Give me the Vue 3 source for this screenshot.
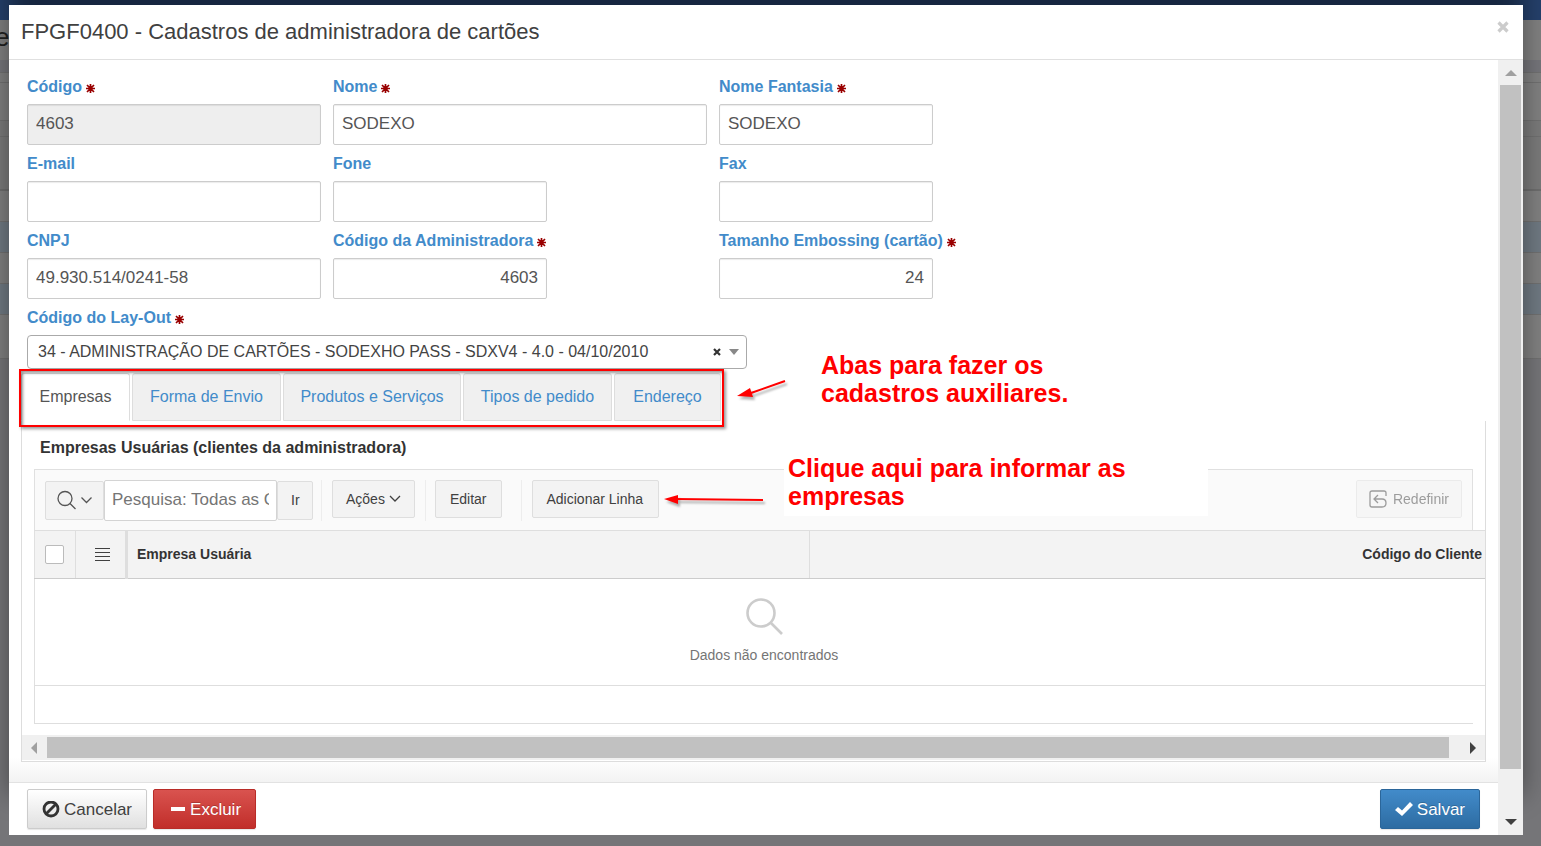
<script setup>
import { ref } from 'vue'

const fields = [
  { id: 'codigo', label: 'Código', value: '4603', required: true, readonly: true },
  { id: 'nome', label: 'Nome', value: 'SODEXO', required: true, wide: true },
  { id: 'fantasia', label: 'Nome Fantasia', value: 'SODEXO', required: true },
  { id: 'email', label: 'E-mail', value: '' },
  { id: 'fone', label: 'Fone', value: '' },
  { id: 'fax', label: 'Fax', value: '' },
  { id: 'cnpj', label: 'CNPJ', value: '49.930.514/0241-58' },
  { id: 'adm', label: 'Código da Administradora', value: '4603', required: true, right: true },
  { id: 'embossing', label: 'Tamanho Embossing (cartão)', value: '24', required: true, right: true },
]
const tabs = ['Empresas', 'Forma de Envio', 'Produtos e Serviços', 'Tipos de pedido', 'Endereço']
const activeTab = ref(0)
const search = ref('')
</script>

<template>
  <div class="page">
    <div class="backdrop" aria-hidden="true">
      <div class="strip navy"></div>
      <div class="strip crumb">e</div>
      <div class="strip bar"></div>
      <div class="strip line"></div>
      <div class="strip tall"></div>
      <div class="strip thin"></div>
      <div class="strip head"></div>
      <div class="strip row"></div>
      <div class="strip row blue"></div>
      <div class="strip row"></div>
      <div class="strip row blue"></div>
      <div class="strip last"></div>
    </div>

    <section class="dialog" role="dialog" aria-labelledby="dialog-title">
      <header class="dialog-head">
        <h1 id="dialog-title">FPGF0400 - Cadastros de administradora de cartões</h1>
        <button class="close" type="button" aria-label="Fechar">
          <svg viewBox="0 0 12 12" width="12" height="12"><path d="M1.500 1.500l9 9M10.500 1.500l-9 9" stroke="#ccc" stroke-width="3.200" /></svg>
        </button>
      </header>

      <div class="dialog-main">
        <div class="column">
          <div class="body">
            <form class="form" @submit.prevent>
              <div v-for="f in fields" :key="f.id" class="field">
                <label :for="f.id">{{ f.label }}
                  <svg v-if="f.required" class="star" viewBox="0 0 9 9"><path d="M4.500 0v9M0 4.500h9M1 1l7 7M8 1l-7 7" /></svg>
                </label>
                <input :id="f.id" type="text" :value="f.value" :readonly="f.readonly"
                  :class="{ full: f.readonly || f.wide || f.id === 'email' || f.id === 'cnpj', readonly: f.readonly, right: f.right }" />
              </div>
              <div class="field layout-field">
                <label for="layout">Código do Lay-Out
                  <svg class="star" viewBox="0 0 9 9"><path d="M4.500 0v9M0 4.500h9M1 1l7 7M8 1l-7 7" /></svg>
                </label>
                <div class="select-wrap">
                  <select id="layout">
                    <option>34 - ADMINISTRAÇÃO DE CARTÕES - SODEXHO PASS - SDXV4 - 4.0 - 04/10/2010</option>
                  </select>
                  <svg class="select-marks" viewBox="0 0 28 10" width="28" height="10">
                    <path d="M2 2l6 6M8 2l-6 6" stroke="#333" stroke-width="2.200" />
                    <path d="M17 2h10l-5 6z" fill="#888" />
                  </svg>
                </div>
              </div>
            </form>

            <div class="tabs-area">
              <nav class="tabs" role="tablist">
                <button v-for="(t, i) in tabs" :key="t" type="button" role="tab" class="tab"
                  :class="{ active: i === activeTab }" :aria-selected="i === activeTab" @click="activeTab = i">{{ t }}</button>
                <div class="highlight"></div>
              </nav>
              <p class="note note-tabs">Abas para fazer os<br />cadastros auxiliares.</p>
              <svg class="arrow arrow-tabs" viewBox="0 0 54 26" width="54" height="26">
                <path d="M50 5L16 17" stroke="#f00" stroke-width="2" />
                <path d="M2 20L15 12L18 21z" fill="#f00" />
              </svg>
            </div>

            <section class="panel">
              <h2>Empresas Usuárias (clientes da administradora)</h2>
              <div class="toolbar">
                <div class="search">
                  <button class="btn seek" type="button" aria-label="Opções de pesquisa">
                    <svg viewBox="0 0 36 20" width="36" height="20" fill="none" stroke="#555" stroke-width="1.300">
                      <circle cx="8" cy="8.500" r="7" /><path d="M13 13.500l5.500 5.500M24.500 7.500l5 5 5-5" />
                    </svg>
                  </button>
                  <input v-model="search" type="text" aria-label="Pesquisa" placeholder="Pesquisa: Todas as Colunas de Texto" />
                  <button class="btn go" type="button">Ir</button>
                </div>
                <div class="group"><button class="btn" type="button">Ações
                  <svg viewBox="0 0 12 8" width="12" height="8" fill="none" stroke="#404040" stroke-width="1.300"><path d="M1 1l5 5 5-5" /></svg>
                </button></div>
                <div class="group"><button class="btn wide-pad" type="button">Editar</button></div>
                <div class="group far"><button class="btn add" type="button">Adicionar Linha</button></div>
                <svg class="arrow arrow-line" viewBox="0 0 106 18" width="106" height="18">
                  <path d="M12 7L100 8" stroke="#f00" stroke-width="2" />
                  <path d="M1 7L15 3V12z" fill="#f00" />
                </svg>
                <p class="note note-line">Clique aqui para informar as<br />empresas</p>
                <button class="btn reset" type="button" disabled>
                  <svg viewBox="0 0 18 18" width="18" height="18" fill="none" stroke="#404040" stroke-width="1.300">
                    <path d="M17 6V3q0-2-2-2H3Q1 1 1 3v12q0 2 2 2h10q4 0 4-4t-4-4H5M9 5L5 9l4 4" />
                  </svg>
                  Redefinir
                </button>
              </div>
              <table class="grid">
                <thead>
                  <tr>
                    <th class="c-check"><input type="checkbox" aria-label="Selecionar tudo" /></th>
                    <th class="c-menu">
                      <svg viewBox="0 0 15 13" width="15" height="13"><path d="M0 .5h15M0 4.500h15M0 8.500h15M0 12.500h15" stroke="#404040" stroke-width="1" /></svg>
                    </th>
                    <th class="c-name">Empresa Usuária</th>
                    <th class="c-code">Código do Cliente</th>
                  </tr>
                </thead>
                <tbody>
                  <tr>
                    <td colspan="4">
                      <div class="empty">
                        <svg viewBox="0 0 38 38" width="38" height="38" fill="none" stroke="#ccc" stroke-width="2.600">
                          <circle cx="16" cy="16" r="13.500" /><path d="M25.500 25.500L37 37" />
                        </svg>
                        <span>Dados não encontrados</span>
                      </div>
                    </td>
                  </tr>
                </tbody>
              </table>
              <div class="grid-foot"></div>
              <div class="hscroll" aria-hidden="true">
                <svg viewBox="0 0 6 12" width="6" height="12"><path d="M6 0v12L0 6z" fill="#a0a0a0" /></svg>
                <div class="hthumb"></div>
                <svg viewBox="0 0 6 12" width="6" height="12"><path d="M0 0v12l6-6z" fill="#404040" /></svg>
              </div>
            </section>
          </div>

          <footer class="foot">
            <button class="action" type="button">
              <svg viewBox="0 0 18 18" width="18" height="18" fill="none" stroke="#333" stroke-width="2.800"><circle cx="9" cy="8" r="7" /><path d="M4 13L14 3" /></svg>
              Cancelar
            </button>
            <button class="action danger" type="button">
              <svg viewBox="0 0 14 18" width="14" height="18"><path d="M0 6h14v4H0z" fill="#fff" /></svg>
              Excluir
            </button>
            <button class="action primary" type="button">
              <svg viewBox="0 0 18 18" width="18" height="18"><path d="M0 9l3-3 4 3.500L15 1l3 3L7 15z" fill="#fff" /></svg>
              Salvar
            </button>
          </footer>
        </div>

        <div class="vscroll" aria-hidden="true">
          <svg viewBox="0 0 12 6" width="12" height="6"><path d="M0 6h12L6 0z" fill="#a0a0a0" /></svg>
          <div class="vthumb"></div>
          <svg viewBox="0 0 12 6" width="12" height="6"><path d="M0 0h12L6 6z" fill="#404040" /></svg>
        </div>
      </div>
    </section>
  </div>
</template>

<style>
body { margin: 0; background: #757578; }
</style>

<style scoped>
* { box-sizing: border-box; }
svg { display: block; flex: none; }
.page {
  position: relative;
  min-height: 100vh;
  padding: 5px 18px 11px 9px;
  display: flex;
  overflow: hidden;
  font: 16px/24px "Liberation Sans", Arial, sans-serif;
  color: #404040;
}
button, input, select { font: inherit; color: inherit; margin: 0; }

.backdrop { position: absolute; inset: 0; background: #757578; }
.strip { background: #808080; border-bottom: 1px solid #707070; }
.navy { height: 20px; background: #25406b; border: 0; }
.crumb { height: 40px; border: 0; font-size: 26px; line-height: 34px; color: #202020; text-indent: -5px; }
.bar { height: 13px; background: #75757a; }
.line { height: 10px; }
.tall { height: 38px; }
.thin { height: 16px; background: #7a7a7a; }
.head { height: 54px; background: #7a7a7a; border-bottom: 2px solid #6d6d6d; }
.row { height: 31px; }
.blue { background: #6f7982; }
.last { height: 44px; }

.dialog {
  position: relative;
  flex: 1;
  min-width: 0;
  display: flex;
  flex-direction: column;
  background: #fff;
  box-shadow: 0 -40px 24px rgba(0, 0, 0, 0.4);
}
.dialog-head {
  height: 55px;
  padding: 0 14px 0 12px;
  display: flex;
  align-items: center;
  justify-content: space-between;
  border-bottom: 1px solid #e0e0e0;
}
h1 { margin: 0; font-size: 22px; line-height: 28px; font-weight: 400; }
.close { padding: 0; border: 0; background: none; margin-bottom: 10px; }
.dialog-main { flex: 1; display: flex; }
.column { flex: 1; min-width: 0; display: flex; flex-direction: column; }
.body {
  flex: 1;
  padding: 15px 12px 20px;
  background: linear-gradient(to top, #f3f3f3, #fff 24px);
}

.form {
  display: grid;
  grid-template-columns: 294px 374px 214px;
  gap: 7px 12px;
  padding: 0 6px;
}
.field label {
  display: flex;
  align-items: center;
  gap: 4px;
  margin-bottom: 5px;
  font-weight: 700;
  color: #428bca;
  white-space: nowrap;
}
.star { width: 9px; height: 9px; margin-top: 3px; stroke: #900; stroke-width: 1.700; }
.field input {
  display: block;
  width: 214px;
  height: 41px;
  padding: 0 8px 2px;
  border: 1px solid #ccc;
  border-radius: 2px;
  background: #fff;
  box-shadow: inset 0 1px 1px rgba(0, 0, 0, 0.08);
  color: #555;
  font-size: 17px;
}
.field input.full { width: 100%; }
.field input.readonly { background: #eee; }
.field input.right { text-align: right; }
.layout-field { grid-column: 1 / -1; }
.select-wrap { position: relative; width: 720px; }
select {
  display: block;
  width: 100%;
  height: 34px;
  padding: 0 40px 0 10px;
  border: 1px solid #aaa;
  border-radius: 4px;
  background: #fff;
  color: #444;
  appearance: none;
}
.select-marks { position: absolute; right: 7px; top: 12px; pointer-events: none; }

.tabs-area { position: relative; display: flex; margin-top: 4px; }
.tabs {
  position: relative;
  display: grid;
  grid-template-columns: 109px 149px 178px 149px 107px;
  gap: 2px;
}
.tab {
  height: 48px;
  padding: 0;
  border: 1px solid #ddd;
  border-radius: 3px 3px 0 0;
  background: #f0f0f0;
  color: #428bca;
  white-space: nowrap;
}
.tab.active { background: #fff; color: #555; border-bottom-color: #fff; }
.highlight {
  position: absolute;
  inset: -4px -3px -6px -2px;
  border: 2px solid #f00;
  box-shadow: 2px 2px 3px rgba(0, 0, 0, 0.4), inset 2px 2px 3px rgba(0, 0, 0, 0.4);
  pointer-events: none;
}
.note { margin: 0; font-size: 25px; line-height: 28px; font-weight: 700; color: #f00; white-space: nowrap; }
.note-tabs { position: absolute; left: 800px; top: -22px; }
.arrow { position: absolute; filter: drop-shadow(2px 3px 1px rgba(0, 0, 0, 0.3)); pointer-events: none; }
.arrow-tabs { left: 714px; top: 3px; }

.panel { border: 1px solid #ddd; border-top: 0; background: #fff; }
h2 { margin: 0; padding: 15px 18px 9px; font-size: 16px; line-height: 24px; color: #333; }
.toolbar {
  position: relative;
  display: flex;
  align-items: center;
  height: 61px;
  margin: 0 12px;
  padding: 0 10px;
  border: 1px solid #e0e0e0;
  border-bottom: 0;
  background: #fafafa;
}
.btn {
  height: 38px;
  padding: 0 13px;
  display: flex;
  align-items: center;
  gap: 4px;
  border: 1px solid #dedede;
  border-radius: 2px;
  background: #f3f3f3;
  font-size: 14px;
  white-space: nowrap;
}
.search { display: flex; align-items: center; }
.search .btn { height: 39px; }
.search input {
  width: 173px;
  height: 41px;
  padding: 0 7px;
  border: 1px solid #d4d4d4;
  border-radius: 2px;
  background: #fff;
  font-size: 17px;
}
.search input::placeholder { color: #757575; opacity: 1; }
.seek { width: 59px; padding: 0 11px; }
.go { width: 36px; }
.group {
  display: flex;
  align-items: flex-start;
  height: 41px;
  margin-left: 8px;
  padding-left: 10px;
  border-left: 1px solid #ededed;
}
.group + .group { margin-left: 10px; padding-left: 9px; }
.group + .group.far { margin-left: 19px; padding-left: 10px; }
.wide-pad { padding: 0 14px; }
.add { padding: 0 15px 0 14px; }
.arrow-line { left: 628px; top: 22px; }
.note-line { position: absolute; left: 749px; top: -16px; width: 424px; height: 62px; padding: 0 4px; background: #fff; }
.reset { margin: 0 0 2px auto; padding: 0 12px; gap: 6px; opacity: 0.5; }

.grid {
  width: calc(100% - 12px);
  margin-left: 12px;
  border-collapse: collapse;
  border-left: 1px solid #e0e0e0;
  table-layout: fixed;
}
.grid th {
  height: 48px;
  padding: 0 3px 2px 9px;
  background: #f3f3f3;
  border-top: 1px solid #dedede;
  border-bottom: 1px solid #ccc;
  font-size: 14px;
  line-height: 20px;
  color: #333;
  text-align: left;
}
.grid th + th { border-left: 1px solid #dedede; }
.grid .c-check { width: 41px; padding: 0 0 0 10px; }
.grid .c-menu { width: 51px; padding: 0 0 0 19px; }
.grid th.c-name { border-left: 3px solid #dedede; width: 683px; }
.grid .c-code { text-align: right; }
.c-check input {
  display: block;
  width: 19px;
  height: 19px;
  appearance: none;
  border: 1px solid #bbb;
  border-radius: 2px;
  background: #fff;
}
.grid td { height: 107px; padding: 0 0 2px 8px; border-bottom: 1px solid #dedede; }
.empty { display: flex; flex-direction: column; align-items: center; gap: 10px; font-size: 14px; line-height: 20px; color: #757575; }
.grid-foot { height: 38px; margin: 0 12px; border: 1px solid #dedede; border-top: 0; border-right: 0; }
.hscroll {
  display: flex;
  align-items: center;
  gap: 10px;
  height: 25px;
  margin: 11px 0 1px;
  padding: 0 9px;
  background: #f0f0f0;
}
.hthumb { flex: 1; height: 21px; margin-right: 11px; background: #c1c1c1; }

.foot {
  display: flex;
  gap: 6px;
  height: 53px;
  padding: 6px 18px;
  border-top: 1px solid #e2e2e2;
}
.action {
  height: 40px;
  padding: 2px 14px 0;
  display: flex;
  align-items: center;
  gap: 4px;
  border: 1px solid #ccc;
  border-radius: 2px;
  background: linear-gradient(#fff, #e0e0e0);
  box-shadow: 0 1px 1px rgba(0, 0, 0, 0.1);
  font-size: 17px;
}
.danger { padding: 2px 14px 0 17px; gap: 5px; border-color: #b92c28; background: linear-gradient(#d9534f, #c12e2a); color: #fff; text-shadow: 0 -1px 0 rgba(0, 0, 0, 0.2); }
.primary { margin-left: auto; border-color: #2b669a; background: linear-gradient(#428bca, #2d6ca2); color: #fff; text-shadow: 0 -1px 0 rgba(0, 0, 0, 0.2); }

.vscroll {
  width: 25px;
  display: flex;
  flex-direction: column;
  align-items: center;
  gap: 9px;
  padding: 10px 0;
  background: #f0f0f0;
}
.vthumb { flex: 1; width: 21px; margin-bottom: 41px; background: #c1c1c1; }
</style>
